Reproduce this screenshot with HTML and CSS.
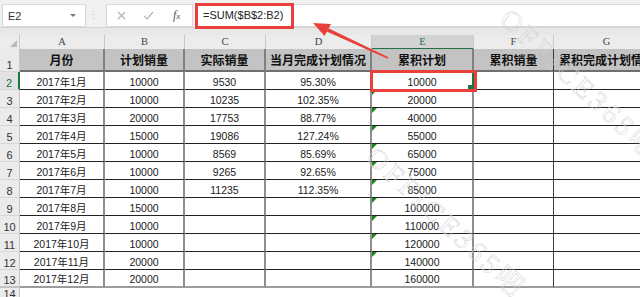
FILE: index.html
```html
<!DOCTYPE html>
<html lang="zh">
<head>
<meta charset="utf-8">
<title>Sheet</title>
<link rel="stylesheet" href="styles.css">
</head>
<body>
<div class="toolbar">
  <div class="namebox"><span class="ref">E2</span><span class="dd"></span></div>
  <div class="dots">⋮</div>
  <div class="fxbtns">
    <svg class="btn-x" width="9" height="9" viewBox="0 0 9 9"><path d="M1 1L8 8M8 1L1 8" stroke="#b3b3b3" stroke-width="1.2" fill="none"/></svg>
    <svg class="btn-ok" width="11" height="9" viewBox="0 0 11 9"><path d="M1 4.8L4 7.8L10 1" stroke="#b3b3b3" stroke-width="1.2" fill="none"/></svg>
    <span class="btn-fx">f<span class="sub">x</span></span>
  </div>
  <div class="formula">=SUM($B$2:B2)</div>
</div>
<div class="band"></div>
<div class="sheet">
  <div class="row colhdr">
    <div class="corner"><span class="tri"></span></div>
    <div class="col">A</div><div class="col">B</div><div class="col">C</div><div class="col">D</div><div class="col sel">E</div><div class="col">F</div><div class="col">G</div>
  </div>
  <div class="row hdr">
    <div class="rh">1</div>
    <div class="c">月份</div><div class="c">计划销量</div><div class="c">实际销量</div><div class="c">当月完成计划情况</div><div class="c">累积计划</div><div class="c f">累积销量</div><div class="c g">累积完成计划情况</div>
  </div>
  <div class="row data">
    <div class="rh cur">2</div>
    <div class="c">2017年1月</div><div class="c">10000</div><div class="c">9530</div><div class="c">95.30%</div><div class="c e active">10000<span class="handle"></span></div><div class="c f"></div><div class="c g"></div>
  </div>
  <div class="row data">
    <div class="rh">3</div>
    <div class="c">2017年2月</div><div class="c">10000</div><div class="c">10235</div><div class="c">102.35%</div><div class="c e warn">20000</div><div class="c f"></div><div class="c g"></div>
  </div>
  <div class="row data">
    <div class="rh">4</div>
    <div class="c">2017年3月</div><div class="c">20000</div><div class="c">17753</div><div class="c">88.77%</div><div class="c e warn">40000</div><div class="c f"></div><div class="c g"></div>
  </div>
  <div class="row data">
    <div class="rh">5</div>
    <div class="c">2017年4月</div><div class="c">15000</div><div class="c">19086</div><div class="c">127.24%</div><div class="c e warn">55000</div><div class="c f"></div><div class="c g"></div>
  </div>
  <div class="row data">
    <div class="rh">6</div>
    <div class="c">2017年5月</div><div class="c">10000</div><div class="c">8569</div><div class="c">85.69%</div><div class="c e warn">65000</div><div class="c f"></div><div class="c g"></div>
  </div>
  <div class="row data">
    <div class="rh">7</div>
    <div class="c">2017年6月</div><div class="c">10000</div><div class="c">9265</div><div class="c">92.65%</div><div class="c e warn">75000</div><div class="c f"></div><div class="c g"></div>
  </div>
  <div class="row data">
    <div class="rh">8</div>
    <div class="c">2017年7月</div><div class="c">10000</div><div class="c">11235</div><div class="c">112.35%</div><div class="c e warn">85000</div><div class="c f"></div><div class="c g"></div>
  </div>
  <div class="row data">
    <div class="rh">9</div>
    <div class="c">2017年8月</div><div class="c">15000</div><div class="c"></div><div class="c"></div><div class="c e warn">100000</div><div class="c f"></div><div class="c g"></div>
  </div>
  <div class="row data">
    <div class="rh">10</div>
    <div class="c">2017年9月</div><div class="c">10000</div><div class="c"></div><div class="c"></div><div class="c e warn">110000</div><div class="c f"></div><div class="c g"></div>
  </div>
  <div class="row data">
    <div class="rh">11</div>
    <div class="c">2017年10月</div><div class="c">10000</div><div class="c"></div><div class="c"></div><div class="c e warn">120000</div><div class="c f"></div><div class="c g"></div>
  </div>
  <div class="row data">
    <div class="rh">12</div>
    <div class="c">2017年11月</div><div class="c">20000</div><div class="c"></div><div class="c"></div><div class="c e warn">140000</div><div class="c f"></div><div class="c g"></div>
  </div>
  <div class="row data last">
    <div class="rh">13</div>
    <div class="c">2017年12月</div><div class="c">20000</div><div class="c"></div><div class="c"></div><div class="c e">160000</div><div class="c f"></div><div class="c g"></div>
  </div>
  <div class="row empty">
    <div class="rh">14</div>
    <div class="c"></div><div class="c"></div><div class="c"></div><div class="c"></div><div class="c"></div><div class="c"></div><div class="c"></div>
  </div>
</div>
<div class="mark mark-formula"></div>
<div class="mark mark-cell"></div>
<svg class="arrow" width="640" height="297" viewBox="0 0 640 297">
  <polygon points="388.4,57.3 328.3,28.2 326.7,31.4 387.6,58.7" fill="#e8413c"/>
  <polygon points="313,23 331,24 324.5,36" fill="#e8413c"/>
</svg>
<div class="wm wm1">OFFICE365吧</div>
<div class="wm wm2">OFFICE365吧</div>
</body>
</html>
```
FILE: styles.css
```css
* { box-sizing: border-box; }
html, body { margin: 0; padding: 0; }
body {
  width: 640px;
  height: 297px;
  overflow: hidden;
  position: relative;
  background: #ffffff;
  font-family: "Liberation Sans", "Noto Sans CJK SC", sans-serif;
  color: #111;
}

/* ---------- formula toolbar ---------- */
.toolbar {
  display: flex;
  align-items: flex-start;
  height: 28px;
  padding-top: 4px;
  background: #f1f1f1;
  border-bottom: 1px solid #d4d4d4;
}
.namebox {
  margin-left: 2px;
  width: 84px;
  height: 23px;
  background: #fff;
  border: 1px solid #d9d9d9;
  display: flex;
  align-items: center;
  padding-left: 5px;
  font-size: 11px;
  color: #333;
}
.namebox .dd {
  margin-left: auto;
  margin-right: 9px;
  width: 0;
  height: 0;
  border-left: 3px solid transparent;
  border-right: 3px solid transparent;
  border-top: 3px solid #7a7a7a;
}
.dots {
  width: 20px;
  height: 23px;
  padding-right: 6px;
  text-align: center;
  line-height: 22px;
  font-size: 11px;
  color: #c0c0c0;
}
.fxbtns {
  width: 87px;
  height: 23px;
  background: #fff;
  border: 1px solid #d9d9d9;
  display: flex;
  align-items: center;
}
.btn-x { margin-left: 10px; }
.btn-ok { margin-left: 17px; }
.btn-fx {
  margin-left: 19px;
  font-family: "Liberation Serif", serif;
  font-style: italic;
  font-size: 12px;
  color: #555;
}
.btn-fx .sub { font-size: 9px; }
.formula {
  margin-left: 2px;
  flex: 1;
  height: 23px;
  background: #fff;
  border: 1px solid #d9d9d9;
  border-right: none;
  padding-left: 7px;
  font-size: 11px;
  line-height: 21px;
  color: #222;
}
.band {
  height: 7px;
  background: #e8e8e8;
}

/* ---------- sheet grid ---------- */
.row {
  display: grid;
  grid-template-columns: 20px 85px 80px 81px 106px 102px 80px 106px;
}
.colhdr { height: 14px; background: #ececec; }
.hdr { height: 23px; }
.data { height: 18px; }
.empty { height: 18px; }

.corner {
  display: flex;
  justify-content: flex-end;
  align-items: flex-end;
  padding: 0 2px 2px 0;
  border-right: 1px solid #c9c9c9;
  border-bottom: 1px solid #bdbdbd;
}
.tri {
  width: 0;
  height: 0;
  border-left: 7px solid transparent;
  border-bottom: 7px solid #b9b9b9;
}
.col {
  border-right: 1px solid #c9c9c9;
  border-bottom: 1px solid #bdbdbd;
  text-align: center;
  font-family: "Liberation Serif", serif;
  font-size: 10.5px;
  line-height: 13px;
  color: #444;
}
.col.sel {
  background: #d3d3d3;
  color: #217346;
  border-bottom: 2px solid #217346;
}

.rh {
  background: #ebebeb;
  border-right: 1px solid #c8c8c8;
  border-bottom: 1px solid #d6d6d6;
  display: flex;
  justify-content: center;
  align-items: flex-end;
  font-size: 11px;
  line-height: 11px;
  color: #333;
}
.rh.cur {
  color: #217346;
  background: #e2e2e2;
  border-right: 2px solid #217346;
}
.empty .rh {
  align-items: flex-start;
  padding-top: 1px;
  border-bottom: none;
}

.c {
  position: relative;
  display: flex;
  justify-content: center;
  align-items: flex-end;
  border-right: 2px solid #8e8e8e;
  border-bottom: 1px solid #222;
  font-size: 10.5px;
  line-height: 13px;
  color: #1a1a1a;
  white-space: nowrap;
  overflow: hidden;
}
.c.f { border-right: 1px solid #3c3c3c; }
.c.g { border-right: none; justify-content: center; }

.hdr .c {
  background: #c3c3c3;
  border-right-color: #808080;
  border-bottom: 2px solid #6f6f6f;
  align-items: center;
  font-family: "Noto Sans CJK SC", sans-serif;
  font-weight: 700;
  font-size: 12px;
  line-height: 14px;
  color: #111;
}
.hdr .c.f { border-right: 1px solid #3c3c3c; }
.hdr .c.g { border-right: none; }

.last .c { border-bottom: 2px solid #9c9c9c; }
.last .rh { border-bottom: 2px solid #c2c2c2; }
.empty .c { border: none; }

.warn::before {
  content: "";
  position: absolute;
  left: 0;
  top: 0;
  width: 0;
  height: 0;
  border-top: 5px solid #178a17;
  border-right: 5px solid transparent;
}
.active { border-right: 2px solid #217346; }
.handle {
  position: absolute;
  right: 0;
  bottom: 0;
  width: 4px;
  height: 4px;
  background: #217346;
}

/* ---------- annotations ---------- */
.mark {
  position: absolute;
  border: 3px solid #e8413c;
  pointer-events: none;
}
.mark-formula { left: 195px; top: 3px; width: 99px; height: 26px; }
.mark-cell { left: 370px; top: 70px; width: 107px; height: 22px; }
.arrow {
  position: absolute;
  left: 0;
  top: 0;
  pointer-events: none;
}
.wm {
  position: absolute;
  font-family: "Liberation Serif", "Noto Sans CJK SC", serif;
  font-size: 28px;
  letter-spacing: 4px;
  line-height: 1;
  color: transparent;
  -webkit-text-stroke: 0.5px #d2d2d2;
  white-space: nowrap;
  transform: translate(-50%, -50%) rotate(43deg);
  pointer-events: none;
}
.wm1 { left: 580px; top: 85px; }
.wm2 { left: 446px; top: 223px; }
```
